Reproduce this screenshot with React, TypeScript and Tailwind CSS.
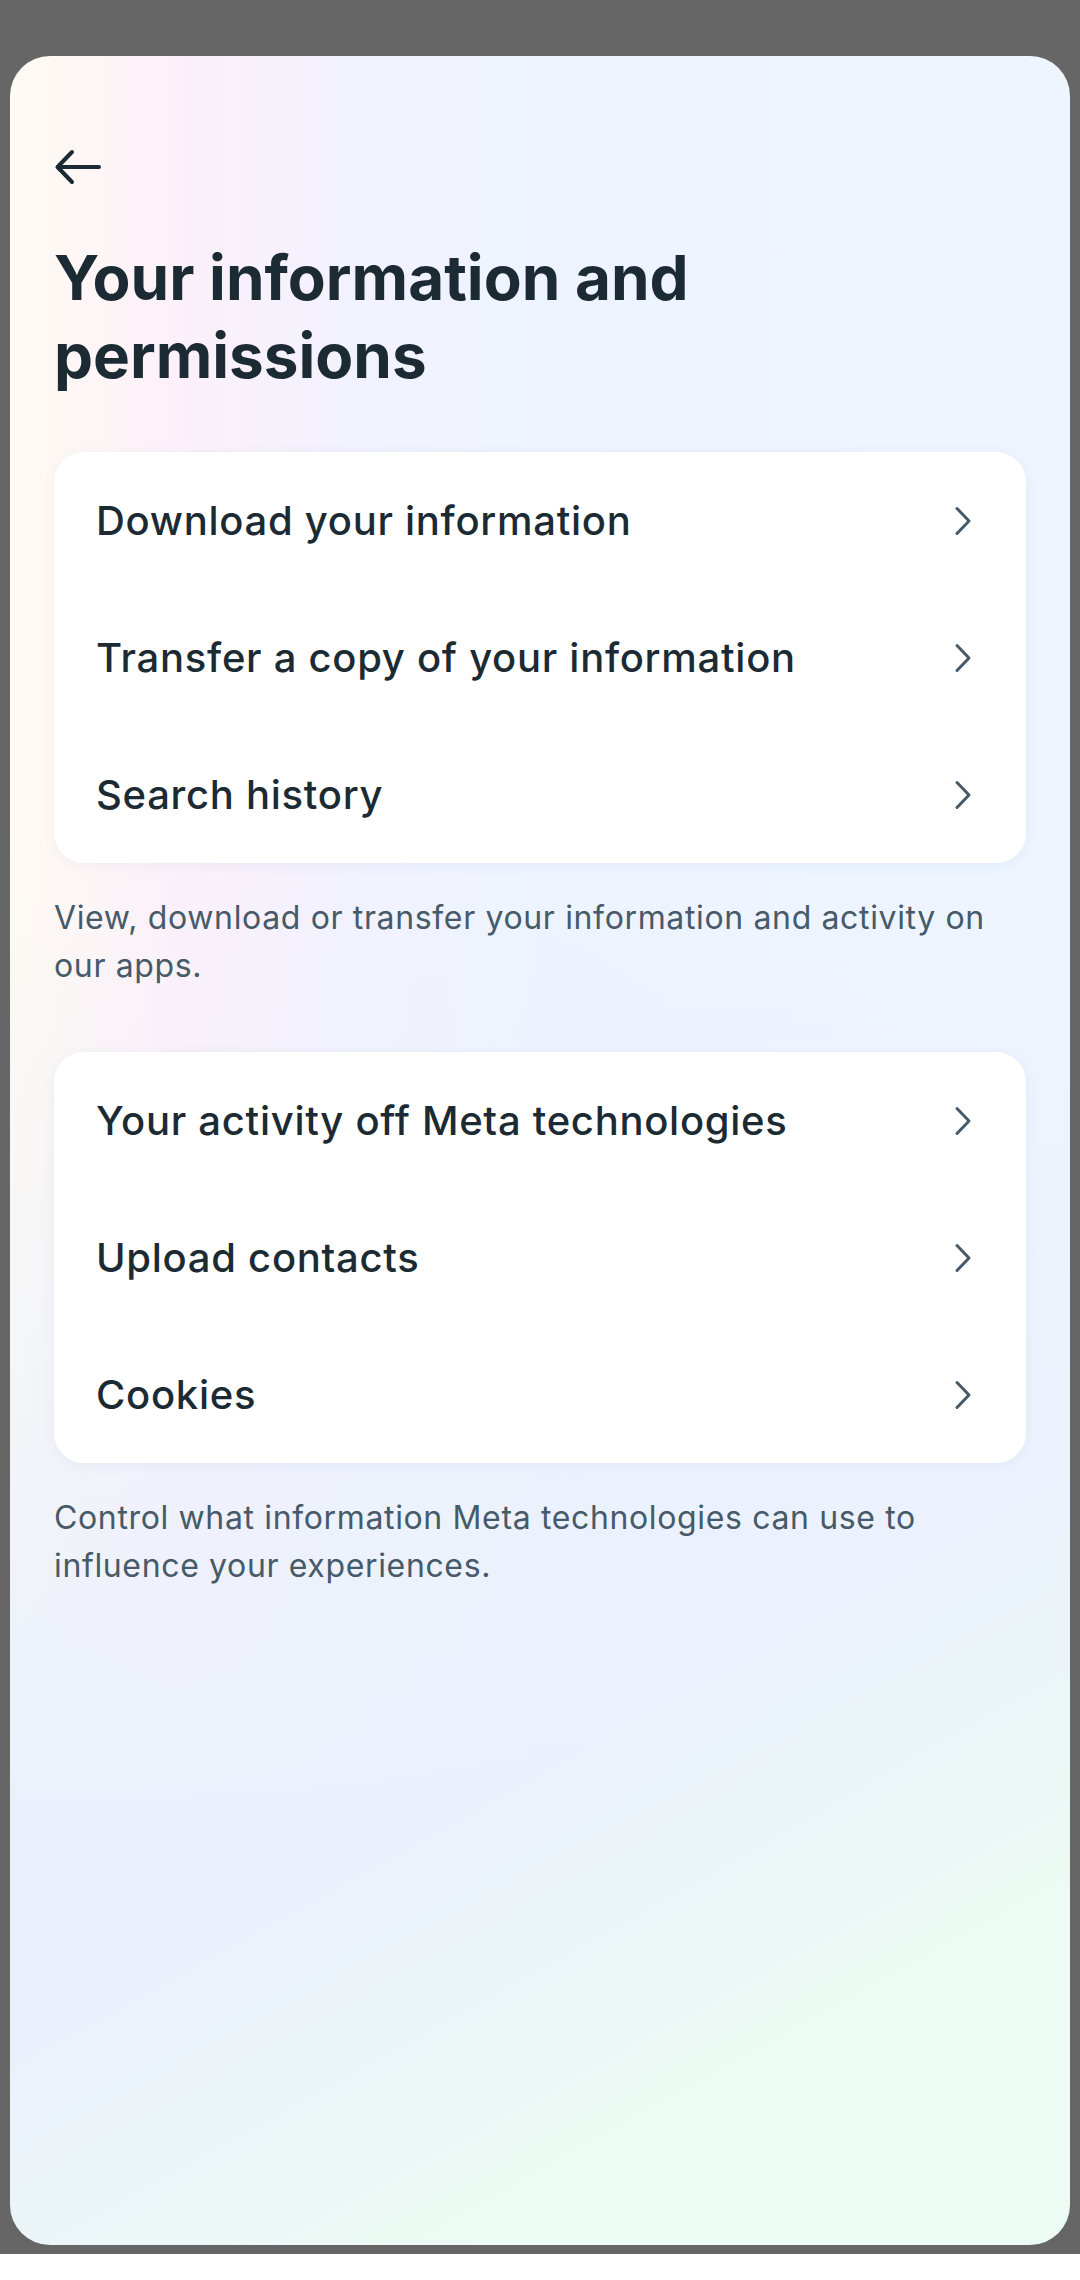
import React from 'react';

const sections = [
  {
    items: ['Download your information', 'Transfer a copy of your information', 'Search history'],
    caption: 'View, download or transfer your information and activity on our apps.',
  },
  {
    items: ['Your activity off Meta technologies', 'Upload contacts', 'Cookies'],
    caption: 'Control what information Meta technologies can use to influence your experiences.',
  },
];

const BackArrow = () => (
  <svg width="48" height="48" viewBox="0 0 48 48" fill="none">
    <path d="M45 24H4M18 9L3.5 24L18 39" stroke="#1c2b33" strokeWidth="4" strokeLinecap="round" strokeLinejoin="round" />
  </svg>
);

const Chevron = () => (
  <svg width="24" height="30" viewBox="0 0 24 30" fill="none">
    <path d="M5 2.5L17 15L5 27.5" stroke="#465a69" strokeWidth="3" strokeLinecap="round" strokeLinejoin="round" />
  </svg>
);

const App = () => {
  return (
    <div className="h-[2280px] w-[1080px] bg-white font-['Inter','Noto_Sans',sans-serif]">
      <div className="h-[2254px] bg-[#666666] px-[10px] pt-[56px]">
        <div className="h-[2189px] rounded-[40px] bg-[linear-gradient(151deg,rgba(236,251,243,0)_72%,#ecfbf3_88%),linear-gradient(to_bottom,rgba(235,241,252,0)_35%,#ebf1fc_80%),linear-gradient(to_right,#fffbf2_0%,#fcf0fa_16%,#f2f2fd_32%,#eef4ff_50%,#eef5ff_100%)] px-[44px] pt-[87px]">
          {/* шапка */}
          <div className="h-[48px] w-[48px]">
            <BackArrow />
          </div>
          <h1 className="mt-[48px] text-[62px] font-bold leading-[78px] text-[#1c2b33]">
            Your information and
            <br />
            permissions
          </h1>

          <div className="mt-[57px] flex flex-col">
            {sections.map((section, i) => (
              <div key={i} className={i > 0 ? 'mt-[62px]' : ''}>
                <div className="rounded-[30px] bg-white shadow-[0_2px_14px_rgba(40,80,160,0.06)]">
                  {section.items.map((item) => (
                    <div key={item} className="flex h-[137px] items-center justify-between pl-[42px] pr-[50px]">
                      <span className="text-[40px] font-medium tracking-[0.018em] text-[#1c2b33]">{item}</span>
                      <Chevron />
                    </div>
                  ))}
                </div>
                <p className="mt-[31px] pr-[10px] text-[32px] leading-[48px] tracking-[0.02em] text-[#465a69]">
                  {section.caption}
                </p>
              </div>
            ))}
          </div>
        </div>
      </div>
    </div>
  );
};

export default App;
